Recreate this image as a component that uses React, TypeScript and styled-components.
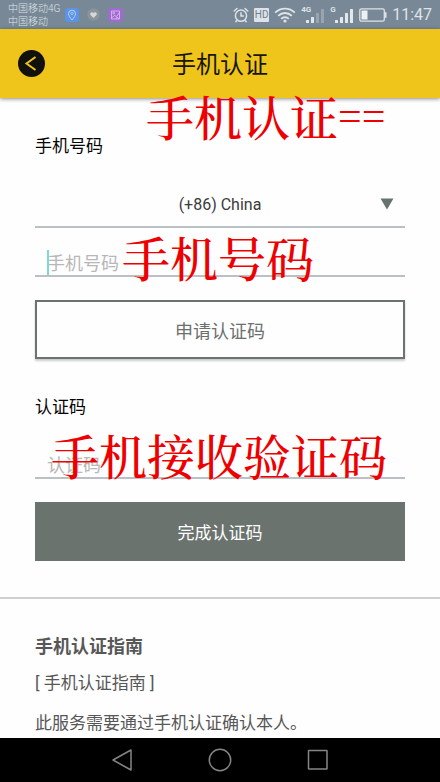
import React from 'react';
import styled, { createGlobalStyle } from 'styled-components';

const GlobalStyle = createGlobalStyle`
  * { box-sizing: border-box; }
  body {
    margin: 0;
    background: #fefefe;
    font-family: Roboto, "Noto Sans CJK SC", sans-serif;
  }
  button, input, select { font-family: inherit; }
`;

const Screen = styled.div`
  display: flex;
  flex-direction: column;
  height: 100vh;
`;

const StatusBar = styled.div`
  display: flex;
  flex: none;
  align-items: center;
  justify-content: space-between;
  height: 29px;
  padding: 0 8px;
  background: #788896;
  color: #dde3e8;
`;

const StatusGroup = styled.div<{ $gap: number }>`
  display: flex;
  align-items: center;
  gap: ${({ $gap }) => $gap}px;
  svg { display: block; }
`;

const Carrier = styled.div`
  font-size: 10px;
  line-height: 13px;
  font-weight: 300;
`;

const Clock = styled.time`
  font-size: 16px;
  line-height: 20px;
  font-weight: 400;
`;

const Header = styled.header`
  display: grid;
  flex: none;
  grid-template-columns: 27px 1fr 27px;
  align-items: center;
  height: 69px;
  padding: 0 18px;
  background: #efc51c;
  box-shadow: 0 1px 4px rgba(0, 0, 0, 0.45);
  position: relative;
`;

const BackButton = styled.button`
  height: 27px;
  padding: 0;
  border: 0;
  border-radius: 50%;
  background: #11110d;
  svg { display: block; }
`;

const Title = styled.h1`
  margin: 0;
  padding-top: 2px;
  color: #171606;
  font-size: 24px;
  font-weight: 400;
  line-height: 32px;
  text-align: center;
`;

const Content = styled.main`
  position: relative;
  flex: 1;
  min-height: 0;
  overflow-y: auto;
  scrollbar-width: none;
`;

const Form = styled.form`
  display: flex;
  flex-direction: column;
  padding: 36px 35px;
`;

const Label = styled.label`
  color: #050505;
  font-size: 17px;
  line-height: 24px;
`;

const Field = styled.div<{ $top: number; $bottom: number }>`
  position: relative;
  margin-top: ${({ $top }) => $top}px;
  margin-bottom: ${({ $bottom }) => $bottom}px;
  border-bottom: 2px solid #bac0c4;
`;

const CountrySelect = styled.select`
  display: block;
  width: 100%;
  height: 46px;
  padding: 2px 24px 0;
  border: 0;
  appearance: none;
  background: transparent;
  color: #3b3b3b;
  font-size: 16px;
  text-align: center;
  text-align-last: center;
`;

const SelectArrow = styled.svg`
  position: absolute;
  right: 11px;
  top: 18px;
  pointer-events: none;
`;

const TextInput = styled.input`
  display: block;
  width: 100%;
  height: 27px;
  padding: 3px 12px 0;
  border: 0;
  outline: 0;
  background: transparent;
  color: #3b3b3b;
  font-size: 18px;
  line-height: 24px;
  &::placeholder { color: #b7b7b7; opacity: 1; }
`;

const Caret = styled.span`
  position: absolute;
  left: 12px;
  bottom: 0;
  width: 2px;
  height: 25px;
  background: #7fd8d6;
`;

const ActionButton = styled.button<{ $filled?: boolean }>`
  height: 59px;
  border: 2px solid #6b736e;
  background: ${({ $filled }) => ($filled ? '#6b736e' : '#fefefe')};
  color: ${({ $filled }) => ($filled ? '#ffffff' : '#6b706d')};
  font-size: ${({ $filled }) => ($filled ? 17 : 18)}px;
  box-shadow: ${({ $filled }) => ($filled ? 'none' : '0 2px 2px rgba(0, 0, 0, 0.2)')};
`;

const SecondLabel = styled(Label)`
  margin-top: 36px;
`;

const Note = styled.span<{ $left: number; $top: number }>`
  position: absolute;
  z-index: 2;
  display: flex;
  align-items: center;
  left: ${({ $left }) => $left}px;
  top: ${({ $top }) => $top}px;
  color: #ee0000;
  font-family: "Noto Serif CJK SC", SimSun, "Noto Sans CJK SC", serif;
  font-size: 48px;
  font-weight: 500;
  line-height: 56px;
  white-space: nowrap;
  pointer-events: none;
`;

const NoteTail = styled.span`
  font-family: "Liberation Serif", serif;
  font-size: 42px;
`;

const NoteLayer = styled.div`
  position: relative;
  z-index: 2;
  height: 0;
`;

const Guide = styled.section`
  padding: 36px 35px;
  border-top: 2px solid #cfcfcf;
  color: #575757;
  font-size: 17px;
  line-height: 24px;
`;

const GuideTitle = styled.h2`
  margin: 0 0 12px;
  font-size: 18px;
  font-weight: 700;
  line-height: 24px;
`;

const GuideText = styled.p`
  margin: 0 0 16px;
`;

const NavBar = styled.nav`
  display: flex;
  flex: none;
  align-items: center;
  justify-content: center;
  gap: 74px;
  height: 44px;
  background: #000;
`;

const NavButton = styled.button`
  width: 24px;
  height: 24px;
  padding: 0;
  border: 0;
  background: transparent;
  svg { display: block; }
`;

const LocationIcon = () => (
  <svg width="14" height="14" viewBox="0 0 14 14" fill="none">
    <rect width="14" height="14" rx="3" fill="#5b94e4" />
    <path d="M7 12 C5 9.5 3.5 7.8 3.5 5.7 a3.5 3.5 0 0 1 7 0 C10.500 7.800 9 9.500 7 12Z" stroke="#b9d2f5" />
    <circle cx="7" cy="5.500" r="1.200" stroke="#b9d2f5" strokeWidth=".8" />
  </svg>
);

const HeartIcon = () => (
  <svg width="13" height="13" viewBox="0 0 13 13">
    <circle cx="6.500" cy="6.500" r="6.200" fill="#8b949b" />
    <path d="M6.500 10 L3.700 7.200 C2.100 5.400 4.600 3 6.500 4.900 C8.400 3 10.900 5.400 9.300 7.200Z" fill="#d5d7d8" />
  </svg>
);

const GalleryIcon = () => (
  <svg width="15" height="14" viewBox="0 0 15 14" fill="none" stroke="#d8b9ec" strokeWidth=".9">
    <rect width="15" height="14" rx="3" fill="#9f6bd0" stroke="none" />
    <path d="M3.500 3h8v8h-8zM3.500 10l3-2.500 2 1 3-4M8 11l1-2 2 2" />
    <circle cx="5.700" cy="5" r=".9" />
  </svg>
);

const AlarmIcon = () => (
  <svg width="16" height="16" viewBox="0 0 16 16" fill="none" stroke="#dde3e8" strokeWidth="1.500" strokeLinecap="round">
    <circle cx="8" cy="8.700" r="5.600" />
    <path d="M1.200 4 4 1.500M14.800 4 12 1.500M8 5.800v3.200h2.400M4 13.300l-1.200 1.400M12 13.300l1.200 1.400" />
  </svg>
);

const HdBadge = styled.span`
  width: 15px;
  height: 14px;
  border-radius: 1px;
  background: #dde3e8;
  color: #71808d;
  font-size: 10px;
  line-height: 14px;
  text-align: center;
`;

const WifiIcon = () => (
  <svg width="22" height="16" viewBox="0 0 22 16" fill="none" stroke="#dde3e8" strokeWidth="1.900">
    <path d="M1.200 5.700 C6.500.2 15.500.2 20.800 5.700M4.200 8.800 C8 5 14 5 17.800 8.800M7.200 11.800 C9.300 9.700 12.700 9.700 14.800 11.800" />
    <circle cx="11" cy="14" r="1.600" fill="#dde3e8" stroke="none" />
  </svg>
);

const Signal = styled.span`
  position: relative;
  display: block;
`;

const SignalTag = styled.span`
  position: absolute;
  left: 0;
  top: 0;
  font-size: 8px;
  line-height: 8px;
  font-weight: 700;
`;

const SignalBars = ({ tag, strength }: { tag: string; strength: number }) => (
  <Signal>
    <SignalTag>{tag}</SignalTag>
    <svg width="24" height="18" viewBox="0 0 24 18" fill="#e3e8ec">
      {[3, 6, 10, 14].map((h, i) => (
        <rect key={h} x={5 + i * 5} y={17 - h} width="3" height={h} rx=".5" opacity={i < strength ? 1 : 0.3} />
      ))}
    </svg>
  </Signal>
);

const BatteryIcon = () => (
  <svg width="28" height="14" viewBox="0 0 28 14" fill="none" stroke="#dde3e8" strokeWidth="1.300">
    <rect x=".8" y=".8" width="24.500" height="12.400" rx="1.600" />
    <path d="M26 4.500h1.200v5H26z" fill="#dde3e8" strokeWidth=".6" />
    <rect x="2.500" y="2.500" width="6" height="9" fill="#edf1f3" stroke="none" />
  </svg>
);

export default function App() {
  return (
    <Screen>
      <GlobalStyle />
      <StatusBar>
        <StatusGroup $gap={5}>
          <Carrier>
            <div>中国移动4G</div>
            <div>中国移动</div>
          </Carrier>
          <StatusGroup $gap={8}>
            <LocationIcon />
            <HeartIcon />
            <GalleryIcon />
          </StatusGroup>
        </StatusGroup>
        <StatusGroup $gap={5}>
          <AlarmIcon />
          <HdBadge>HD</HdBadge>
          <WifiIcon />
          <SignalBars tag="4G" strength={2} />
          <SignalBars tag="G" strength={4} />
          <BatteryIcon />
          <Clock>11:47</Clock>
        </StatusGroup>
      </StatusBar>

      <Header>
        <BackButton type="button" aria-label="返回">
          <svg width="27" height="27" viewBox="0 0 27 27" fill="none" stroke="#efc51c" strokeWidth="2">
            <path d="M17.500 7 8.500 13.500l9 6.500" />
          </svg>
        </BackButton>
        <Title>手机认证</Title>
      </Header>
      <NoteLayer>
        <Note $left={146} $top={-10}>手机认证<NoteTail>==</NoteTail></Note>
      </NoteLayer>

      <Content>
        <Form onSubmit={(e) => e.preventDefault()}>
          <Label htmlFor="phone">手机号码</Label>
          <Field $top={22} $bottom={20}>
            <CountrySelect aria-label="国家" defaultValue="86">
              <option value="86">(+86) China</option>
            </CountrySelect>
            <SelectArrow width="14" height="12" viewBox="0 0 14 12">
              <path d="M.5.5h13L7 11.500z" fill="#68736d" />
            </SelectArrow>
          </Field>
          <Field $top={0} $bottom={23}>
            <TextInput id="phone" type="tel" placeholder="手机号码" />
            <Caret />
            <Note $left={87} $top={-19}>手机号码</Note>
          </Field>
          <ActionButton type="button">申请认证码</ActionButton>
          <SecondLabel htmlFor="code">认证码</SecondLabel>
          <Field $top={31} $bottom={23}>
            <TextInput id="code" type="text" placeholder="认证码" />
            <Note $left={16} $top={-23}>手机接收验证码</Note>
          </Field>
          <ActionButton type="submit" $filled>完成认证码</ActionButton>
        </Form>
        <Guide>
          <GuideTitle>手机认证指南</GuideTitle>
          <GuideText>[ 手机认证指南 ]</GuideText>
          <GuideText>此服务需要通过手机认证确认本人。</GuideText>
        </Guide>
      </Content>

      <NavBar>
        <NavButton type="button" aria-label="后退">
          <svg width="24" height="24" viewBox="0 0 24 24" fill="none" stroke="#858585" strokeWidth="1.500" strokeLinejoin="round">
            <path d="M21 2v20L3 12z" />
          </svg>
        </NavButton>
        <NavButton type="button" aria-label="主页">
          <svg width="24" height="24" viewBox="0 0 24 24" fill="none" stroke="#858585" strokeWidth="1.500">
            <circle cx="12" cy="12" r="10.700" />
          </svg>
        </NavButton>
        <NavButton type="button" aria-label="最近任务">
          <svg width="24" height="24" viewBox="0 0 24 24" fill="none" stroke="#858585" strokeWidth="1.500">
            <rect x="2.500" y="2.500" width="18.500" height="18.500" rx=".5" />
          </svg>
        </NavButton>
      </NavBar>
    </Screen>
  );
}
